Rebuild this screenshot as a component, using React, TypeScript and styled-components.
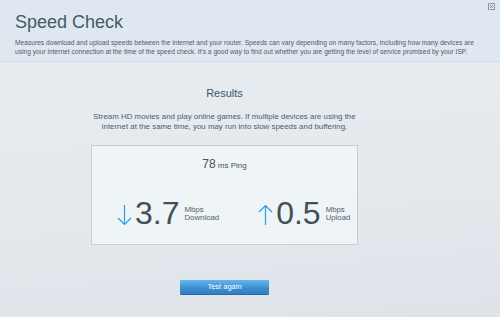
import styled, { createGlobalStyle } from "styled-components";

const GlobalStyle = createGlobalStyle`
  html, body {
    margin: 0;
    padding: 0;
  }
  body {
    font-family: "Liberation Sans", Arial, sans-serif;
    background: #e4eaee;
  }
`;

const Page = styled.div`
  position: relative;
  width: 500px;
  height: 317px;
  overflow: hidden;
  background: linear-gradient(175deg, #e7edf1 0%, #e3e9ed 60%, #dde3e8 100%);
`;

const Header = styled.div`
  height: 62px;
  box-sizing: border-box;
  padding: 12px 15px 0 15px;
  background: #dfe8f0;
  border-bottom: 1px solid #d0dce7;
`;

const Title = styled.h1`
  margin: 0;
  font-size: 18px;
  font-weight: normal;
  color: #44596a;
  line-height: 20px;
`;

const Intro = styled.p`
  margin: 6px 0 0 0;
  font-size: 6.65px;
  line-height: 9px;
  color: #4f5d69;
  white-space: nowrap;
`;

const CloseButton = styled.div`
  position: absolute;
  top: 3px;
  right: 5px;
  width: 5px;
  height: 5px;
  border: 1px solid #8d99a3;
  display: flex;
  align-items: center;
  justify-content: center;
`;

const Content = styled.div`
  width: 267px;
  margin: 0 0 0 91px;
  padding-top: 24px;
  display: flex;
  flex-direction: column;
  align-items: center;
`;

const SectionTitle = styled.h2`
  margin: 0;
  font-size: 11px;
  font-weight: normal;
  color: #3e5466;
  line-height: 14px;
`;

const Blurb = styled.p`
  margin: 12px 0 0 0;
  width: 290px;
  text-align: center;
  font-size: 7.9px;
  line-height: 10px;
  color: #4f5d69;
`;

const ResultBox = styled.div`
  box-sizing: border-box;
  width: 267px;
  height: 100px;
  margin-top: 13px;
  background: #eff4f7;
  border: 1px solid #c6cdd3;
  display: flex;
  flex-direction: column;
  align-items: center;
`;

const Ping = styled.div`
  margin-top: 11px;
  color: #45525d;
  font-size: 8px;
  span {
    font-size: 12px;
  }
`;

const SpeedRow = styled.div`
  margin-top: 28px;
  display: flex;
  align-self: stretch;
  padding-left: 25px;
  gap: 39px;
`;

const Speed = styled.div`
  display: flex;
  align-items: flex-end;
`;

const Arrow = styled.svg`
  width: 15px;
  height: 22px;
  margin-right: 3px;
  margin-bottom: 1px;
`;

const Value = styled.div`
  font-size: 32px;
  line-height: 28px;
  color: #434f59;
`;

const Units = styled.div`
  margin-left: 5px;
  margin-bottom: 5px;
  font-size: 7.8px;
  line-height: 8px;
  color: #525f6a;
`;

const Actions = styled.div`
  margin-top: 35px;
  display: flex;
  justify-content: center;
`;

const Button = styled.button`
  width: 89px;
  height: 14px;
  padding: 0;
  border: none;
  border-radius: 1px;
  background: linear-gradient(#63b5ea, #3a8ed0 60%, #2f7fc2);
  box-shadow: 0 1px 0 #2a6aa0;
  color: #ffffff;
  font-family: "Liberation Sans", Arial, sans-serif;
  font-size: 7.5px;
  line-height: 14px;
`;

const DirectionArrow = ({ up }: { up?: boolean }) => (
  <Arrow viewBox="0 0 15 22">
    {up ? (
      <path d="M7.5 21 V1.5 M1 8 L7.5 1.5 L14 8" fill="none" stroke="#2a9de3" strokeWidth="1.2" />
    ) : (
      <path d="M7.5 1 V20.5 M1 14 L7.5 20.5 L14 14" fill="none" stroke="#2a9de3" strokeWidth="1.2" />
    )}
  </Arrow>
);

export default function App() {
  return (
    <>
      <GlobalStyle />
      <Page>
        <Header>
          <Title>Speed Check</Title>
          <Intro>
            Measures download and upload speeds between the internet and your router. Speeds can vary depending on many factors, including how many devices are
            <br />
            using your internet connection at the time of the speed check. It's a good way to find out whether you are getting the level of service promised by your ISP.
          </Intro>
        </Header>
        <CloseButton>
          <svg width="5" height="5" viewBox="0 0 5 5">
            <path d="M1 1 L4 4 M4 1 L1 4" stroke="#7d8992" strokeWidth="0.9" />
          </svg>
        </CloseButton>
        <Content>
          <SectionTitle>Results</SectionTitle>
          <Blurb>
            Stream HD movies and play online games. If multiple devices are using the internet at the same time, you may run into slow speeds and buffering.
          </Blurb>
          <ResultBox>
            <Ping>
              <span>78</span> ms Ping
            </Ping>
            <SpeedRow>
              <Speed>
                <DirectionArrow />
                <Value>3.7</Value>
                <Units>
                  Mbps
                  <br />
                  Download
                </Units>
              </Speed>
              <Speed>
                <DirectionArrow up />
                <Value>0.5</Value>
                <Units>
                  Mbps
                  <br />
                  Upload
                </Units>
              </Speed>
            </SpeedRow>
          </ResultBox>
          <Actions>
            <Button>Test again</Button>
          </Actions>
        </Content>
      </Page>
    </>
  );
}
